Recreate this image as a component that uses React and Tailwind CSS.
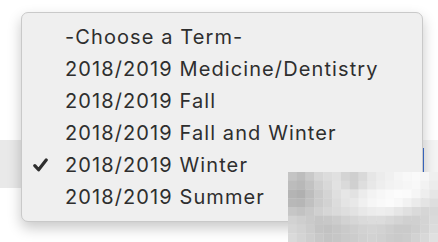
const terms = [
  { label: '-Choose a Term-' },
  { label: '2018/2019 Medicine/Dentistry' },
  { label: '2018/2019 Fall' },
  { label: '2018/2019 Fall and Winter' },
  { label: '2018/2019 Winter', checked: true },
  { label: '2018/2019 Summer' },
];

const mosaic = [
  ['#c4c4c4', '#bdbdbd', '#c9c9c9', '#d6d6d6', '#dcdcdc', '#e0e0e0', '#d4d4d4', '#cfcfcf', '#d9d9d9', '#e6e6e6', '#ececec', '#f0f0f0', '#f5f5f5', '#f8f8f8', '#fafafa', '#f6f6f6', '#efefef'],
  ['#bcbcbc', '#b8b8b8', '#c2c2c2', '#cfcfcf', '#d8d8d8', '#e2e2e2', '#dadada', '#d0d0d0', '#dedede', '#e8e8e8', '#eeeeee', '#f2f2f2', '#f4f4f4', '#f6f6f6', '#f8f8f8', '#f2f2f2', '#ececec'],
  ['#b4b4b4', '#b0b0b0', '#bdbdbd', '#cacaca', '#d4d4d4', '#dfdfdf', '#e6e6e6', '#e2e2e2', '#ececec', '#f3f3f3', '#f7f7f7', '#fafafa', '#fcfcfc', '#fbfbfb', '#f6f6f6', '#eeeeee', '#e6e6e6'],
  ['#b8b8b8', '#b6b6b6', '#c0c0c0', '#cbcbcb', '#d2d2d2', '#dcdcdc', '#e4e4e4', '#e8e8e8', '#f0f0f0', '#f6f6f6', '#f9f9f9', '#fbfbfb', '#f8f8f8', '#f2f2f2', '#ebebeb', '#e4e4e4', '#dedede'],
  ['#c6c6c6', '#c2c2c2', '#c8c8c8', '#d0d0d0', '#d6d6d6', '#dadada', '#dedede', '#e2e2e2', '#e8e8e8', '#ececec', '#eeeeee', '#ececec', '#e6e6e6', '#e0e0e0', '#dadada', '#d6d6d6', '#d8d8d8'],
  ['#d2d2d2', '#cecece', '#cacaca', '#c6c6c6', '#c8c8c8', '#cccccc', '#d2d2d2', '#d6d6d6', '#dadada', '#dcdcdc', '#dcdcdc', '#d8d8d8', '#d4d4d4', '#d0d0d0', '#d0d0d0', '#d4d4d4', '#dadada'],
  ['#d6d6d6', '#d2d2d2', '#cccccc', '#c4c4c4', '#c2c2c2', '#c6c6c6', '#cacaca', '#cecece', '#d2d2d2', '#d4d4d4', '#d2d2d2', '#cecece', '#cacaca', '#cacaca', '#cecece', '#d4d4d4', '#dcdcdc'],
  ['#dadada', '#d4d4d4', '#cecece', '#c8c8c8', '#c4c4c4', '#c6c6c6', '#cacaca', '#cccccc', '#d0d0d0', '#d2d2d2', '#d0d0d0', '#cccccc', '#cacaca', '#cccccc', '#d2d2d2', '#d8d8d8', '#e0e0e0'],
];

function Mosaic() {
  return (
    <svg width="150" height="70" viewBox="0 0 150 70" className="block">
      {mosaic.map((row, r) =>
        row.map((fill, c) => (
          <rect key={`${r}-${c}`} x={c * 8.83} y={r * 8.75} width="9" height="9" fill={fill} />
        ))
      )}
    </svg>
  );
}

export default function App() {
  return (
    <div className="relative w-[438px] h-[242px] overflow-hidden bg-white font-['Inter',sans-serif]">
      {/* page behind the popup */}
      <div className="h-[140px]" />
      <div className="flex h-[48px] bg-[#e9e9e9]">
        <div className="flex-1" />
        <div className="flex w-[17px] bg-[#f4f4f4]">
          <div className="mt-[8px] h-[24px] w-[3px] bg-[#3d6fd0]" />
        </div>
      </div>

      {/* popup menu */}
      <div className="absolute left-[21px] top-[12px] w-[402px] rounded-[7px] border border-[#c9c9c9] bg-[#efefef] pt-[8px] pb-[8px] shadow-[0_6px_14px_rgba(0,0,0,0.22)]">
        {terms.map((term) => (
          <div key={term.label} className="flex h-[32px] items-center text-[20px] tracking-[1.1px] text-[#2e2e2e]">
            <span className="flex w-[43px] justify-end pr-[17px]">
              {term.checked && (
                <svg width="15" height="14" viewBox="0 0 15 14">
                  <path d="M1.8 7.6 L5.6 11.8 L13.2 2" fill="none" stroke="#2e2e2e" strokeWidth="3.2" strokeLinecap="round" strokeLinejoin="round" />
                </svg>
              )}
            </span>
            <span>{term.label}</span>
          </div>
        ))}
      </div>

      {/* blurred corner */}
      <div className="absolute left-[288px] top-[172px]">
        <Mosaic />
      </div>
    </div>
  );
}
